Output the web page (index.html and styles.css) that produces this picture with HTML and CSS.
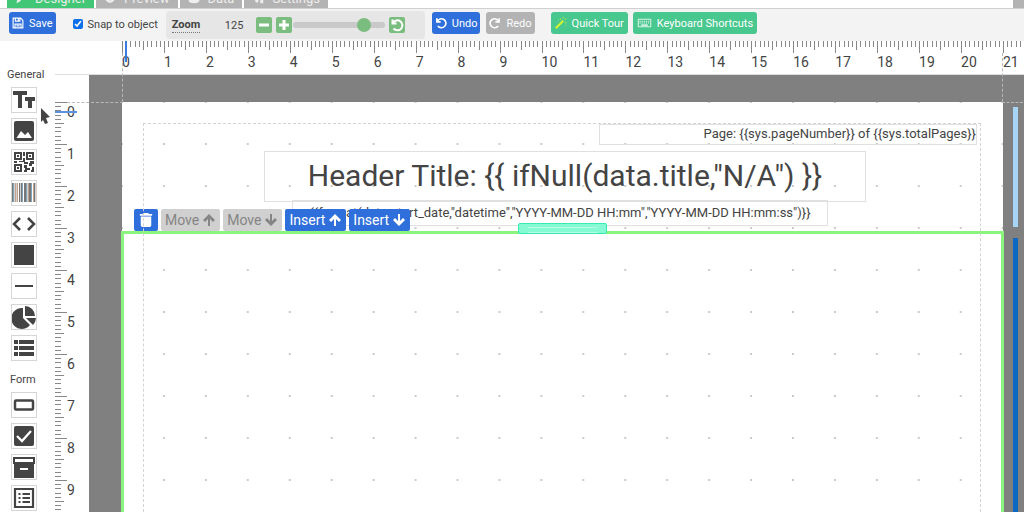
FILE: index.html
```html
<!DOCTYPE html>
<html lang="en">
<head>
  <meta charset="UTF-8">
  <meta name="viewport" content="width=device-width, initial-scale=1.0">
  <title>Report Designer</title>
  <link rel="stylesheet" href="styles.css">
</head>
<body>
  <nav class="tabs">
    <a href="#designer" class="tab active"><svg viewBox="0 0 16 16"><path d="M2 15l1-5 8-8 3 3-8 8z"/></svg>Designer</a>
    <a href="#preview" class="tab"><svg viewBox="0 0 16 16"><path d="M0 8q8-13 16 0q-8 13-16 0zM8 5a3 3 0 100 6 3 3 0 000-6z" fill-rule="evenodd"/></svg>Preview</a>
    <a href="#data" class="tab"><svg viewBox="0 0 16 16"><path d="M1 3q7-4 14 0v10q-7 4-14 0z"/></svg>Data</a>
    <a href="#settings" class="tab"><svg viewBox="0 0 16 16"><path d="M4 1h3l1 3 3 1v4l-2 1-1 4H5l-1-3-3-1V5l3-1zM11 10h4v5h-4z"/></svg>Settings</a>
    <span class="tab-end"></span>
  </nav>

  <div class="toolbar">
    <button class="btn blue save"><svg viewBox="0 0 16 16" fill="none" stroke="currentColor" stroke-width="1.500"><path d="M1.500 1.500h10l3 3v10h-13zM4.500 1.500v4h6v-4M4 14.500v-5h8v5M8.500 2v2.500M6 11.800h4"/></svg>Save</button>
    <label class="snap"><input type="checkbox" checked>Snap to object</label>
    <div class="zoom">
      <label class="zoom-label" for="zoom">Zoom</label>
      <span class="zoom-value">125</span>
      <button class="mini" aria-label="Zoom out"><svg viewBox="0 0 16 16"><path d="M3 6.500h10v3H3z"/></svg></button>
      <button class="mini" aria-label="Zoom in"><svg viewBox="0 0 16 16"><path d="M3 6.500h3.500V3h3v3.500H13v3H9.500V13h-3V9.500H3z"/></svg></button>
      <input type="range" id="zoom" min="0" max="160" value="131">
      <button class="mini reset" aria-label="Reset zoom"><svg viewBox="0 0 16 16" fill="none" stroke="currentColor" stroke-width="2"><path d="M3.500 2.500v4h4M4 6a5 5 0 11.500 5.500"/></svg></button>
    </div>
    <button class="btn blue undo"><svg viewBox="0 0 16 16" fill="none" stroke="currentColor" stroke-width="2.200"><path d="M2.500 1.500v5h5M3 6a6 6 0 11.800 6"/></svg>Undo</button>
    <button class="btn grey redo"><svg viewBox="0 0 16 16" fill="none" stroke="currentColor" stroke-width="2.200"><path d="M13.500 1.500v5h-5M13 6a6 6 0 10-.8 6"/></svg>Redo</button>
    <button class="btn green tour"><svg viewBox="0 0 16 16" fill="none" stroke="#d8f52b"><path d="M1 15L11 5" stroke-width="2.500"/><path d="M13 4l2-2M8 4L7 2M11 2V0M13 7l2 1M4 4h1M14 11h1"/></svg>Quick Tour</button>
    <button class="btn green keys"><svg viewBox="0 0 18 14" fill="none" stroke="currentColor"><path d="M1.500 2.500h15v9h-15z"/><path d="M3 5h12M3 7h12" stroke-dasharray="1.500 1"/><path d="M5 9.500h8" stroke-width="1.500"/></svg>Keyboard Shortcuts</button>
  </div>

  <main>
    <aside class="tools">
      <h2>General</h2>
      <button aria-label="Text"><svg viewBox="0 0 24 24"><path d="M1 3h14v4h-5v13H6V7H1zM13 9h10v4h-3v7h-4v-7h-3z"/></svg></button>
      <button aria-label="Image"><svg viewBox="0 0 24 24"><path fill-rule="evenodd" d="M4 2h16a2 2 0 012 2v16a2 2 0 01-2 2H4a2 2 0 01-2-2V4a2 2 0 012-2zM4.500 19h15.500l-4-6-3 3-4-4z"/></svg></button>
      <button aria-label="QR code"><svg viewBox="0 0 24 24"><path fill-rule="evenodd" d="M2 2h8v8H2zM4 4v4h4V4zM14 2h8v8h-8zM16 4v4h4V4zM2 14h8v8H2zM4 16v4h4v-4zM5 5h2v2H5zM17 5h2v2h-2zM5 17h2v2H5zM11 2h2v4h-2zM11 8h2v4h3v2h-4v-2H7v-1h4zM2 11h3v2H2zM18 11h4v3h-2v2h-3v-3h1zM12 15h3v3h3v2h-3v2h-3v-2h1v-2h-1zM20 17h2v5h-3v-2h1z"/></svg></button>
      <button aria-label="Barcode"><svg viewBox="0 0 24 24"><path fill="#777" d="M0 2h1v19H0zM7 2h1v19H7zM9 2h1v19H9zM12 2h2v19h-2zM17 2h2v19h-2zM22 2h1v19h-1z"/><path fill="#7fa5bf" d="M1 2h1v19H1zM10 2h1v19h-1zM14 2h1v19h-1zM19 2h1v19h-1z"/><path fill="#c4a48c" d="M3 2h1v19H3zM5 2h1v19H5zM16 2h1v19h-1zM21 2h1v19h-1z"/><path fill="#d0d0d0" d="M2 2h1v19H2zM4 2h1v19H4zM8 2h1v19H8zM15 2h1v19h-1zM23 2h1v19h-1z"/></svg></button>
      <button aria-label="HTML"><svg viewBox="0 0 24 24" fill="none" stroke="currentColor" stroke-width="2.500"><path d="M8 6l-6 6 6 6M16 6l6 6-6 6"/></svg></button>
      <button aria-label="Rectangle"><svg viewBox="0 0 24 24"><path d="M2 2h20v20H2z"/></svg></button>
      <button aria-label="Line"><svg viewBox="0 0 24 24"><path d="M3 11h18v2H3z"/></svg></button>
      <button aria-label="Chart"><svg viewBox="0 0 24 24"><path d="M11 3v10l7 7A10.500 10.500 0 1111 3zM13 1a10 10 0 0110 10H13zM14 13h10a11 11 0 01-3 7z"/></svg></button>
      <button aria-label="Table"><svg viewBox="0 0 24 24"><path d="M2 4h4v4H2zM7 4h15v4H7zM2 10h4v4H2zM7 10h15v4H7zM2 16h4v4H2zM7 16h15v4H7z"/></svg></button>

      <h2>Form</h2>
      <button aria-label="Text field"><svg viewBox="0 0 24 24" fill="none" stroke="currentColor" stroke-width="2.500"><rect x="3" y="7.500" width="18" height="9" rx="1"/></svg></button>
      <button aria-label="Checkbox"><svg viewBox="0 0 24 24"><rect x="2" y="2" width="20" height="20" rx="2"/><path d="M5 12l5 5 9-10" fill="none" stroke="#fff" stroke-width="2.300"/></svg></button>
      <button aria-label="Dropdown"><svg viewBox="0 0 24 24"><path fill-rule="evenodd" d="M1 2h22v7h-1v14H2V9H1zM3 4v3h18V4zM8 13v2h8v-2z"/></svg></button>
      <button aria-label="List"><svg viewBox="0 0 24 24" fill="none" stroke="currentColor" stroke-width="2.200"><path d="M3 3h18v18H3z"/><path d="M6.500 8h2M6.500 12h2M6.500 16h2M10.500 8H18M10.500 12H18M10.500 16H18"/></svg></button>
    </aside>

    <div class="workspace">
      <div class="ruler-top" id="ruler-top"></div>
      <div class="stage">
        <div class="ruler-left" id="ruler-left"></div>
        <div class="desk">
          <div class="page">
            <div class="band header-band">
              <div class="field page-number">Page: {{sys.pageNumber}} of {{sys.totalPages}}</div>
              <div class="field title">Header Title: {{ ifNull(data.title,"N/A") }}</div>
              <div class="field date">{{format(data.start_date,"datetime","YYYY-MM-DD HH:mm","YYYY-MM-DD HH:mm:ss")}}</div>
            </div>
            <div class="band detail-band">
              <div class="band-menu">
                <button class="trash" aria-label="Delete"><svg viewBox="0 0 14 16"><path d="M4 0h6v1h4v2H0V1h4zM1 4h12v10q0 2-2 2H3q-2 0-2-2z"/></svg></button>
                <button disabled>Move<svg viewBox="0 0 14 14"><path d="M7 1l6 6-2 2-3-3v7H6V6L3 9 1 7z"/></svg></button>
                <button disabled>Move<svg viewBox="0 0 14 14"><path d="M7 13l6-6-2-2-3 3V1H6v7L3 5 1 7z"/></svg></button>
                <button>Insert<svg viewBox="0 0 14 14"><path d="M7 1l6 6-2 2-3-3v7H6V6L3 9 1 7z"/></svg></button>
                <button>Insert<svg viewBox="0 0 14 14"><path d="M7 13l6-6-2-2-3 3V1H6v7L3 5 1 7z"/></svg></button>
              </div>
              <div class="handle"></div>
            </div>
            <div class="margins"></div>
          </div>
          <div class="band-map">
            <span class="map-header"></span>
            <span class="map-detail"></span>
          </div>
        </div>
      </div>
      <div class="guide"></div>
    </div>
  </main>

  <svg class="cursor" viewBox="0 0 10 18"><path d="M0 0l9 9-4 1 2 5-3 1-2-4-2 2z" fill="#444"/></svg>

  <script src="ruler.js"></script>
</body>
</html>
```
FILE: styles.css
```css
* {
  margin: 0;
  padding: 0;
  box-sizing: border-box;
}

body {
  display: flex;
  flex-direction: column;
  height: 100vh;
  overflow: hidden;
  background: #fff;
  color: #444;
  font-family: Roboto, "Liberation Sans", sans-serif;
}

button {
  border: none;
  font-family: inherit;
  cursor: pointer;
}

svg {
  display: block;
  flex: none;
  fill: currentColor;
}

svg[fill="none"] {
  fill: none;
}

/* tabs */
.tabs {
  display: flex;
  align-items: flex-end;
  flex: none;
  gap: 2px;
  height: 8px;
  padding-left: 7px;
  overflow: hidden;
}

.tab {
  display: flex;
  align-items: center;
  gap: 8px;
  height: 28px;
  padding: 8px 8px 0;
  background: #b3b3b3;
  color: #eee;
  font-size: 13px;
  text-decoration: none;
}

.tab svg {
  width: 12px;
  height: 12px;
}

.tab.active {
  background: #42c777;
}

.tab-end {
  width: 11px;
  height: 28px;
  margin-left: auto;
  background: #b3b3b3;
}

/* toolbar */
.toolbar {
  display: flex;
  align-items: flex-start;
  flex: none;
  height: 33px;
  padding: 3px 9px 0;
  border-top: 1px solid #d0d0d0;
  background: #f3f3f3;
}

.btn {
  display: flex;
  align-items: center;
  justify-content: center;
  gap: 5px;
  height: 22px;
  padding: 0 3px;
  border-radius: 3px;
  color: #fff;
  font-size: 11px;
  white-space: nowrap;
}

.btn svg {
  width: 12px;
  height: 12px;
}

.blue {
  background: #2f6fdb;
}

.grey {
  background: #b3b3b3;
}

.green {
  padding: 0 4px;
  background: #48c78e;
}

.snap {
  display: flex;
  align-items: center;
  gap: 5px;
  height: 24px;
  margin: 0 8px 0 17px;
  font-size: 11px;
}

.snap input {
  width: 10px;
  height: 10px;
  accent-color: #0b6fea;
}

.zoom {
  display: flex;
  align-items: center;
  width: 259px;
  height: 28px;
  margin: -1px 7px 0 0;
  padding: 0 6px;
  border-radius: 4px;
  background: #e6e6e6;
  font-size: 11px;
}

.zoom-label {
  border-bottom: 1px dotted #777;
  font-weight: bold;
  line-height: 14px;
}

.zoom-value {
  width: 43px;
  margin-right: 13px;
  text-align: right;
}

.mini {
  width: 16px;
  height: 16px;
  margin-right: 4px;
  border-radius: 2px;
  background: #7bbd7f;
  color: #fff;
}

.mini svg {
  width: 16px;
  height: 16px;
}

.zoom input {
  width: 92px;
  height: 14px;
  margin: 0 4px 0 -3px;
  background: none;
  appearance: none;
}

.zoom input::-webkit-slider-runnable-track {
  height: 6px;
  border-radius: 3px;
  background: #c9c9c9;
}

.zoom input::-webkit-slider-thumb {
  width: 14px;
  height: 14px;
  margin-top: -4px;
  border-radius: 50%;
  background: #7bbd7f;
  appearance: none;
}

.redo {
  margin: 0 16px 0 6px;
}

.keys {
  margin-left: 5px;
}

.keys svg {
  width: 15px;
}

/* element palette */
main {
  display: flex;
  flex: 1;
  min-height: 0;
}

.tools {
  flex: none;
  width: 55px;
  padding: 24px 0 0 11px;
}

.tools h2 {
  height: 22px;
  margin-left: -4px;
  font-size: 11px;
  font-weight: normal;
  line-height: 20px;
}

.tools h2:not(:first-child) {
  margin: 9px 0 0 -1px;
}

.tools button {
  display: flex;
  align-items: center;
  justify-content: center;
  width: 26px;
  height: 26px;
  margin-bottom: 5px;
  border: 1px solid #d6d6d6;
  background: #fff;
  color: #444;
}

.tools svg {
  width: 24px;
  height: 24px;
}

/* rulers */
.workspace {
  display: flex;
  flex: 1;
  flex-direction: column;
  position: relative;
  min-width: 0;
}

.ruler-top {
  display: grid;
  grid-template-columns: repeat(21, 1fr) 21px;
  flex: none;
  position: relative;
  height: 33px;
  padding-left: 67px;
}

.ruler-top::after {
  content: '';
  position: absolute;
  top: 0;
  left: 70px;
  width: 2px;
  height: 21px;
  background: #3b7be0;
}

.cm {
  min-width: 0;
  color: #444;
  font-size: 14px;
  line-height: 16px;
}

.ticks {
  display: grid;
}

.ruler-top .ticks {
  grid-template-columns: repeat(10, 1fr);
  height: 13px;
}

.ruler-top .cm:last-child .ticks {
  width: 42px;
}

.ruler-top i {
  height: 6px;
  border-left: 1px solid #888;
}

.ruler-top i:nth-child(6) {
  height: 9px;
}

.ruler-top i:first-child {
  height: 12px;
}

.ruler-left {
  flex: none;
  position: relative;
  width: 34px;
  padding-top: 27px;
}

.ruler-left .cm {
  display: flex;
  height: 42px;
}

.ruler-left .ticks {
  grid-template-rows: repeat(10, 1fr);
  width: 12px;
}

.ruler-left i {
  width: 6px;
  border-top: 1px solid #888;
}

.ruler-left i:nth-child(6) {
  width: 9px;
}

.ruler-left i:first-child {
  width: 12px;
}

.ruler-left b {
  padding-top: 2px;
}

.cm b {
  font-weight: normal;
}

.ruler-left::after {
  content: '';
  position: absolute;
  top: 36px;
  left: 0;
  width: 22px;
  height: 2px;
  background: #5b91de;
}

/* dashed lines from the rulers to the page corners */
.guide {
  position: absolute;
  top: 12px;
  right: 21px;
  left: 67px;
  height: 49px;
  border: 1px dashed #b8b8b8;
  border-width: 0 1px;
  pointer-events: none;
}

.guide::before,
.guide::after {
  content: '';
  position: absolute;
  top: 100%;
  border-top: 1px dashed #b8b8b8;
}

.guide::before {
  right: 100%;
  width: 56px;
}

.guide::after {
  left: 100%;
  width: 21px;
}

/* design area */
.stage {
  display: flex;
  flex: 1;
  position: relative;
  min-height: 0;
  border-top: 1px solid #ddd;
  overflow: hidden;
}

.desk {
  display: flex;
  flex: 1;
  padding: 27px 6px 0 33px;
  background: #808080;
}

.page {
  display: flex;
  flex: 1;
  flex-direction: column;
  position: relative;
  background-color: #fff;
  background-image: radial-gradient(circle at 1px 1px, #ccc 1px, transparent 1px);
  background-position: -1px -1px;
  background-size: calc(100% / 21) 42px;
}

.header-band {
  flex: none;
  position: relative;
  height: 129px;
}

.detail-band {
  flex: 1;
  position: relative;
  margin: 0 -1px;
  border: 3px solid #8af47c;
  border-bottom: none;
}

.margins {
  position: absolute;
  inset: 21px 22px 0 21px;
  border: 1px dashed #d4d4d4;
  border-bottom: none;
  pointer-events: none;
}

.field {
  display: flex;
  align-items: center;
  justify-content: center;
  position: absolute;
  padding-bottom: 2px;
  border: 1px solid #e0e0e0;
  white-space: nowrap;
}

.page-number {
  top: 22px;
  right: 26px;
  width: 378px;
  height: 21px;
  justify-content: flex-end;
  font-size: 13px;
}

.title {
  top: 49px;
  left: 142px;
  width: 602px;
  height: 51px;
  font-size: 30px;
}

.date {
  top: 98px;
  left: 170px;
  width: 536px;
  height: 26px;
  font-size: 13px;
}

.band-menu {
  display: flex;
  gap: 3px;
  position: absolute;
  bottom: 100%;
  left: 10px;
  margin-bottom: 3px;
}

.band-menu button {
  display: flex;
  align-items: center;
  justify-content: center;
  gap: 3px;
  height: 22px;
  padding: 0 4px;
  border-radius: 2px;
  background: #2f6fdb;
  color: #fff;
  font-size: 14px;
}

.band-menu button:disabled {
  background: #d0d0d0;
  color: #858585;
}

.band-menu svg {
  width: 14px;
  height: 14px;
}

.band-menu .trash {
  width: 24px;
}

.handle {
  position: absolute;
  top: -11px;
  left: 394px;
  width: 89px;
  height: 11px;
  padding: 3px 9px;
  border: 1px solid #34ecb2;
  border-radius: 2px;
  background: #85fad3;
}

.handle::before {
  content: '';
  display: block;
  height: 4px;
  border: 1px solid #b8fde6;
  border-width: 1px 0;
}

/* band overview on the right */
.band-map {
  display: flex;
  flex-direction: column;
  flex: none;
  gap: 11px;
  width: 5px;
  margin: 5px 0 0 10px;
}

.map-header {
  height: 120px;
  background: #a6d5f7;
}

.map-detail {
  flex: 1;
  background: #0b69c3;
}

.cursor {
  position: absolute;
  top: 108px;
  left: 41px;
  width: 10px;
  height: 18px;
}
```
FILE: ruler.js
```js
function addMarks(ruler, count) {
  for (let n = 0; n < count; n++) {
    const cm = document.createElement('div');
    cm.className = 'cm';
    cm.innerHTML = '<div class="ticks">' + '<i></i>'.repeat(10) + '</div><b>' + n + '</b>';
    ruler.appendChild(cm);
  }
}

addMarks(document.getElementById('ruler-top'), 22);
addMarks(document.getElementById('ruler-left'), 10);
```
